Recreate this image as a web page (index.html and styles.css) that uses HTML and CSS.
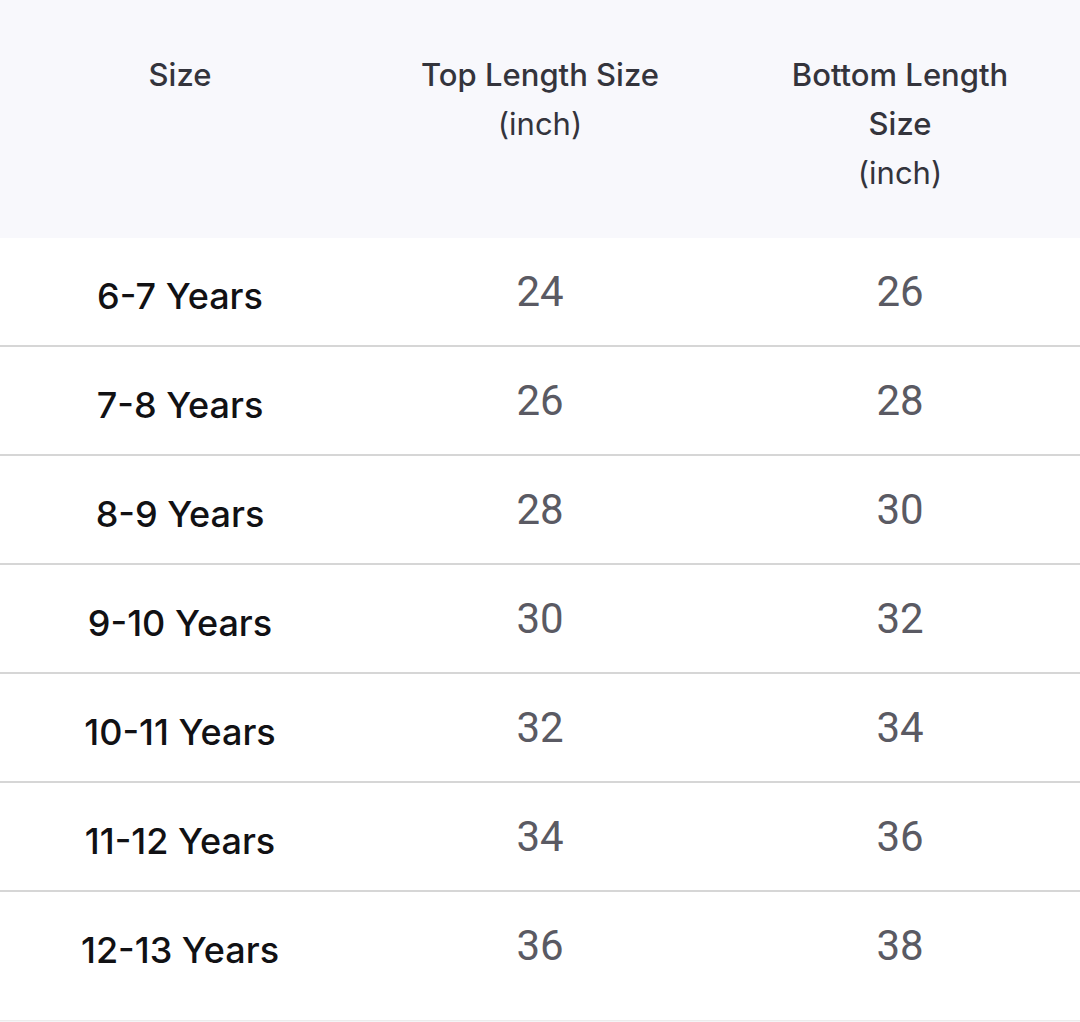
FILE: index.html
```html
<!DOCTYPE html>
<html>
<head>
<meta charset="utf-8">
<link rel="stylesheet" href="styles.css">
</head>
<body>
<div class="chart">
  <div class="head">
    <div class="hcell">Size</div>
    <div class="hcell">Top Length Size<br><span class="unit">(inch)</span></div>
    <div class="hcell">Bottom Length<br>Size<br><span class="unit">(inch)</span></div>
  </div>
  <div class="row"><div class="label">6-7 Years</div><div class="val">24</div><div class="val">26</div></div>
  <div class="row"><div class="label">7-8 Years</div><div class="val">26</div><div class="val">28</div></div>
  <div class="row"><div class="label">8-9 Years</div><div class="val">28</div><div class="val">30</div></div>
  <div class="row"><div class="label">9-10 Years</div><div class="val">30</div><div class="val">32</div></div>
  <div class="row"><div class="label">10-11 Years</div><div class="val">32</div><div class="val">34</div></div>
  <div class="row"><div class="label">11-12 Years</div><div class="val">34</div><div class="val">36</div></div>
  <div class="row last"><div class="label">12-13 Years</div><div class="val">36</div><div class="val">38</div></div>
</div>
</body>
</html>
```
FILE: styles.css
```css
html, body {
  margin: 0;
  padding: 0;
  background: #ffffff;
}
.chart {
  width: 1080px;
  height: 1022px;
  overflow: hidden;
  background: #f4f4f6;
  font-family: "Inter", "Liberation Sans", sans-serif;
}
.head {
  display: grid;
  grid-template-columns: 360px 360px 360px;
  height: 238px;
  background: #f8f8fc;
  color: #34343c;
  font-size: 31px;
  font-weight: 500;
  line-height: 49px;
}
.hcell {
  text-align: center;
  padding-top: 50px;
}
.hcell .unit {
  font-weight: 400;
}
.row {
  display: grid;
  grid-template-columns: 360px 360px 360px;
  height: 107px;
  background: #ffffff;
  border-bottom: 2px solid #d6d6d6;
  align-items: center;
}
.row.last {
  height: 107px;
  padding-bottom: 21px;
  border-bottom: 1px solid #ececec;
}
.label {
  text-align: center;
  font-size: 36px;
  font-weight: 500;
  color: #111114;
  padding-top: 9px;
}
.val {
  text-align: center;
  font-family: "Roboto", "Liberation Sans", sans-serif;
  font-size: 42px;
  color: #5a5a63;
}
```
